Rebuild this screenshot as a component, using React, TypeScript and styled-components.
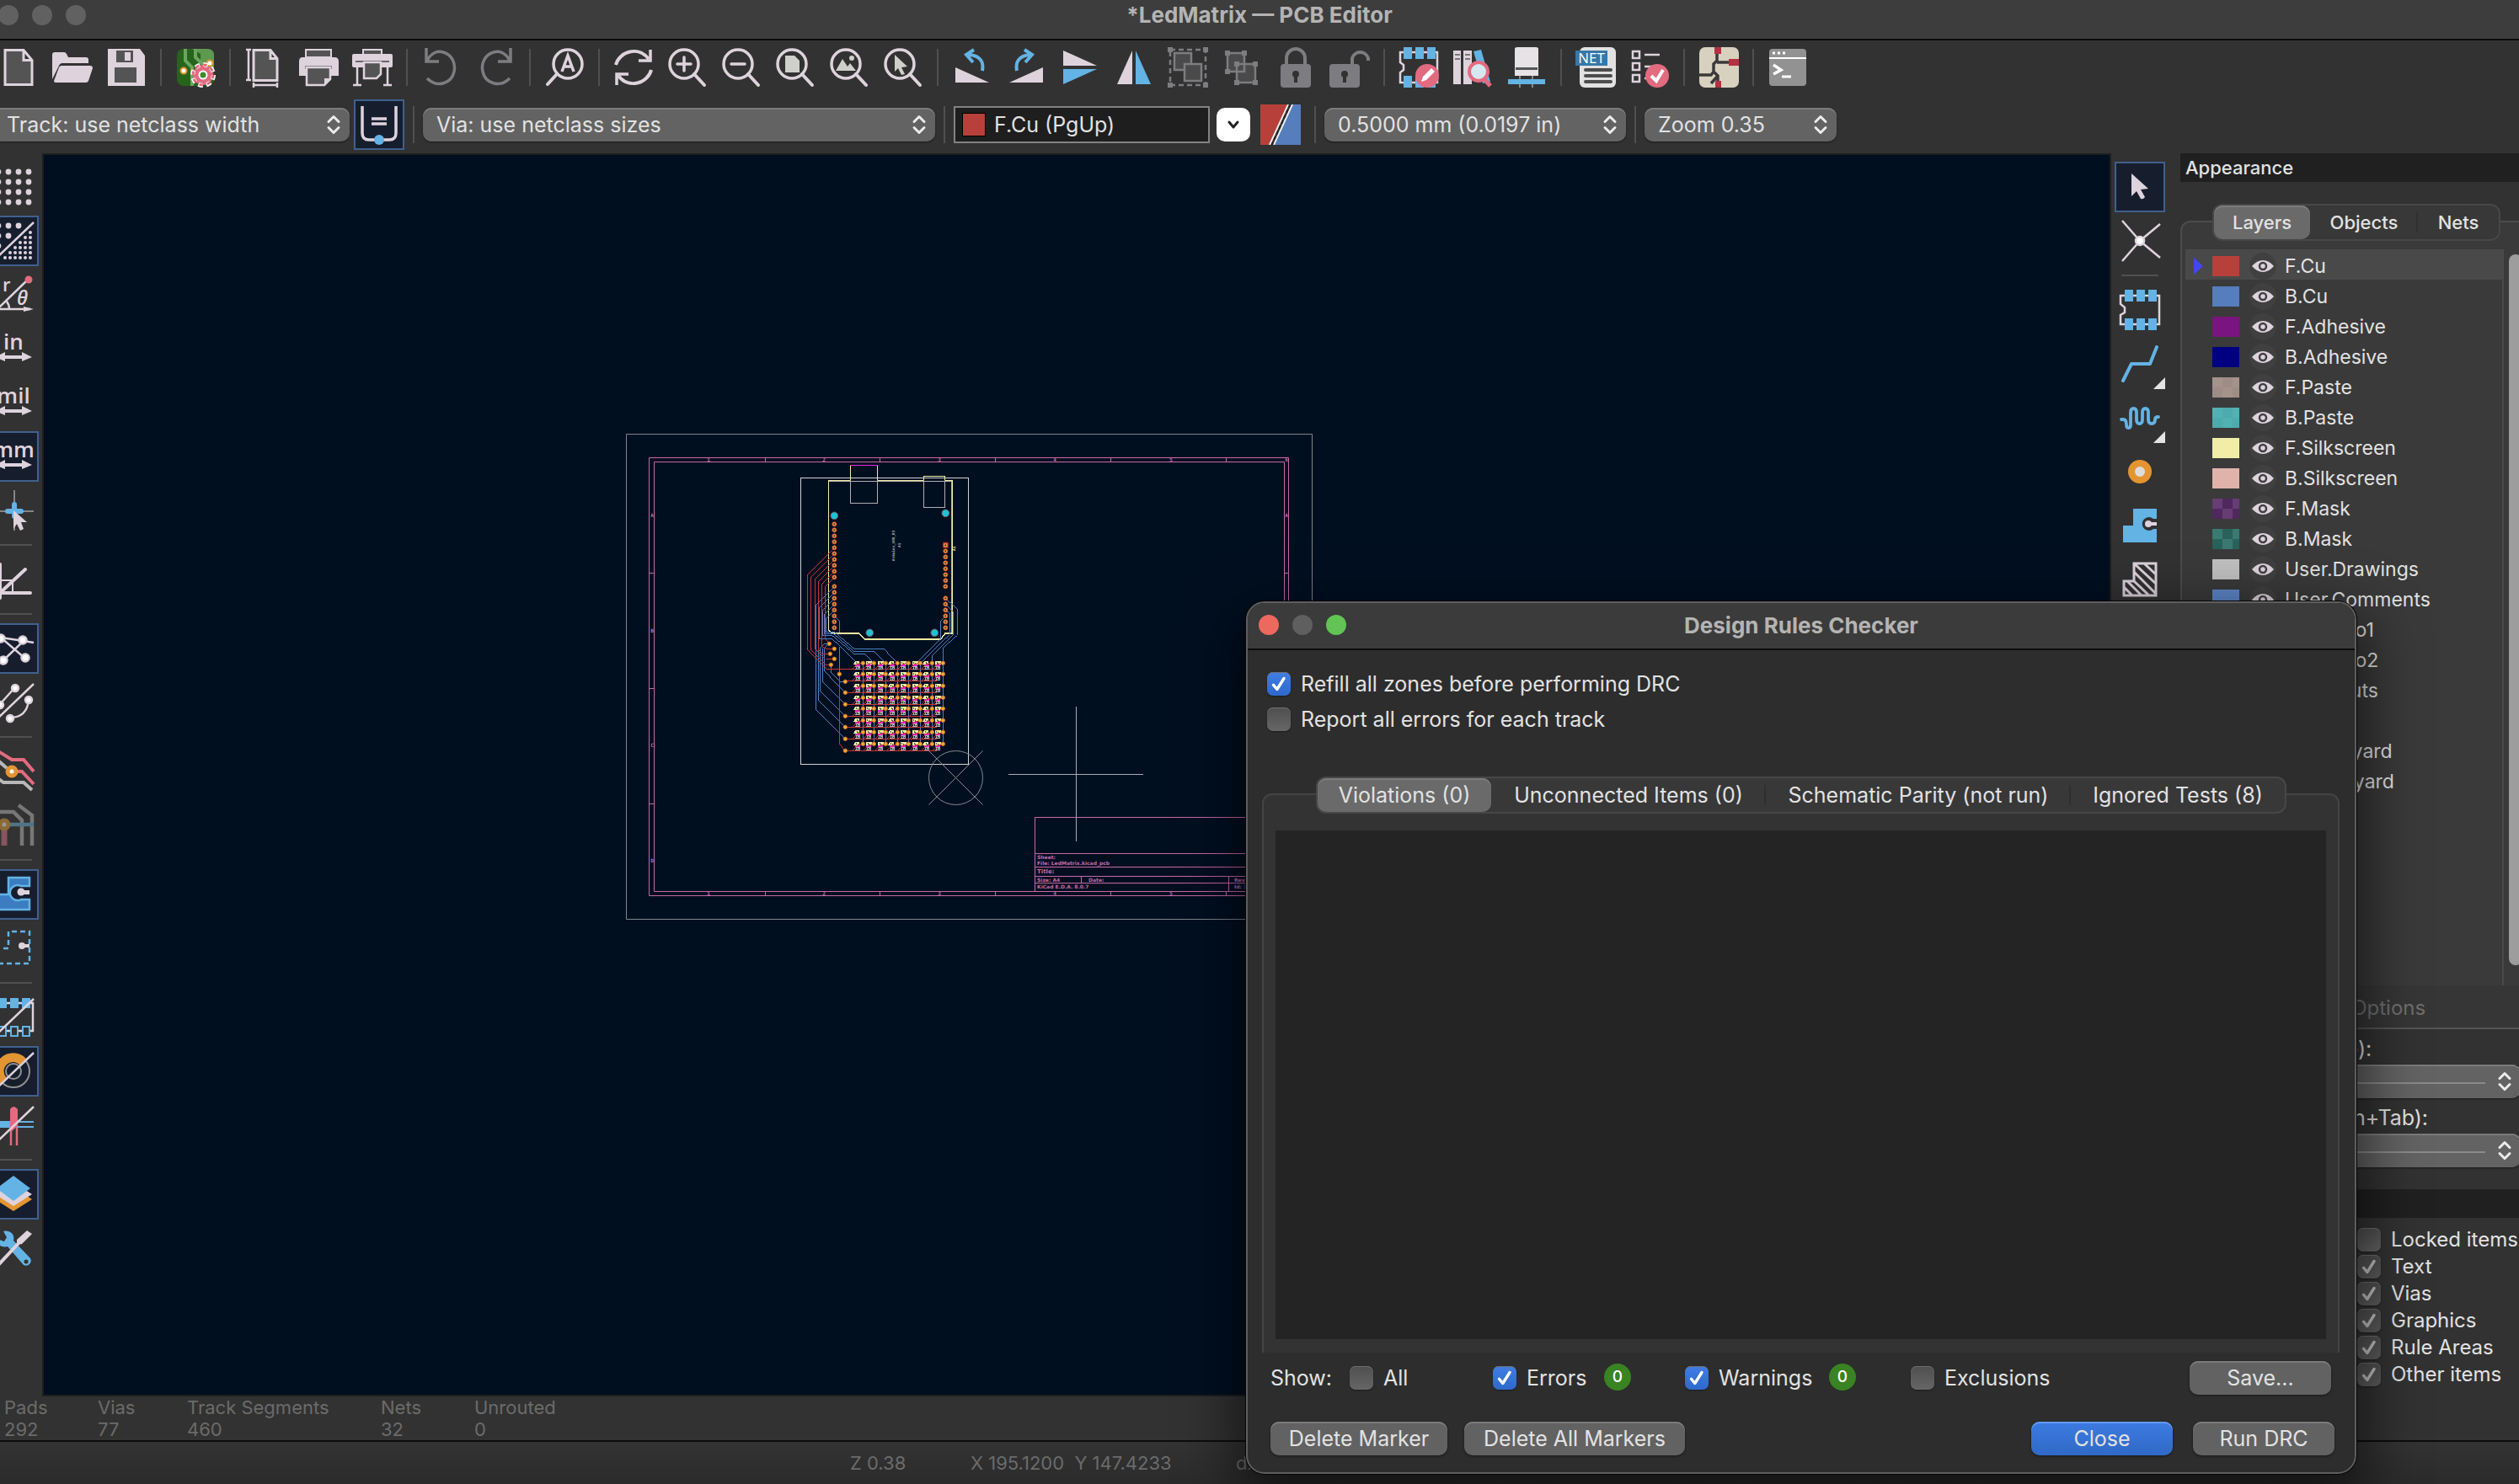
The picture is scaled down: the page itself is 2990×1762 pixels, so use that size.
import React from 'react';
import styled, { createGlobalStyle } from 'styled-components';

const C = {
  light: '#ded3dd',
  blue: '#63b3e5',
  dim: '#7d7c80',
  paper: '#545454',
  red: '#b8403a',
  pink: '#e26b80',
  orange: '#e39532',
  text: '#e2e2e2',
};

const Global = createGlobalStyle`
  *, *::before, *::after { box-sizing: border-box; }
  body { margin: 0; background: #323232; overflow: hidden; }
  button, select, input { font: inherit; color: inherit; margin: 0; }
`;

const Window = styled.div`
  position: relative;
  display: flex;
  flex-direction: column;
  height: 100vh;
  overflow: hidden;
  background: #323232;
  color: ${C.text};
  font-family: Inter, "Liberation Sans", sans-serif;
  font-size: 25px;
  line-height: 32px;
  white-space: nowrap;
`;

const TitleBar = styled.header`
  position: relative;
  display: flex;
  align-items: center;
  justify-content: center;
  height: 48px;
  padding-bottom: 10px;
  background: #3d3d3d;
  border-bottom: 2px solid #0c0c0c;
  flex: none;
`;

const Title = styled.h1`
  margin: 0;
  font-size: 26px;
  font-weight: 700;
  color: #b4b4b4;
`;

const Lights = styled.div<{ $left: number; $top: number }>`
  position: absolute;
  left: ${p => p.$left}px;
  top: ${p => p.$top}px;
  display: flex;
  gap: 16px;
`;

const Light = styled.button<{ $color: string }>`
  width: 24px;
  height: 24px;
  padding: 0;
  border: 0;
  border-radius: 50%;
  background: ${p => p.$color};
`;

const IconBar = styled.div`
  display: flex;
  align-items: center;
  gap: 4px;
  height: 64px;
  margin-left: -8px;
  flex: none;
`;

const ToolButton = styled.button<{ $on?: boolean }>`
  position: relative;
  display: grid;
  place-items: center;
  flex: none;
  width: 60px;
  height: 60px;
  padding: 0;
  border: 2px solid ${p => (p.$on ? '#40608f' : 'transparent')};
  background: ${p => (p.$on ? '#161e2e' : 'transparent')};
`;

const Rule = styled.span<{ $across?: boolean }>`
  flex: none;
  width: ${p => (p.$across ? 44 : 2)}px;
  height: ${p => (p.$across ? 2 : 44)}px;
  margin: ${p => (p.$across ? '6px 8px' : '0 6px')};
  background: #505050;
`;

const OptionBar = styled.div`
  display: flex;
  align-items: center;
  height: 70px;
  padding-top: 2px;
  flex: none;
`;

const TrackGroup = styled.div`
  display: flex;
  align-items: center;
  gap: 5px;
  margin-left: -8px;
  flex: none;
`;

const BarRule = styled.span`
  width: 2px;
  height: 44px;
  margin: 0 10px;
  background: #505050;
  flex: none;
`;

const SelectBox = styled.span<{ $width?: number }>`
  display: grid;
  align-items: center;
  flex: none;
  width: ${p => (p.$width ? p.$width + 'px' : 'auto')};
  height: 40px;
  border-radius: 10px;
  background: #636363;
  box-shadow: inset 0 2px 0 #7b7b7b, 0 1px 2px rgba(0, 0, 0, 0.5);
  & > * { grid-area: 1 / 1; }
`;

const Select = styled.select`
  appearance: none;
  width: 100%;
  height: 40px;
  padding: 0 48px 0 16px;
  border: 0;
  background: transparent;
  line-height: 32px;
`;

const ChevronSvg = styled.svg`
  justify-self: end;
  margin-right: 10px;
  pointer-events: none;
`;

const Chevrons = () => (
  <ChevronSvg width="18" height="24" viewBox="0 0 18 24" fill="none" stroke="#ececec" strokeWidth="3" strokeLinecap="round" strokeLinejoin="round">
    <path d="M3 8.5 9 2.5l6 6M3 15.5l6 6 6-6" />
  </ChevronSvg>
);

const Drop = ({ label, value, width }: { label: string; value: string; width: number }) => (
  <SelectBox $width={width}>
    <Select aria-label={label} defaultValue={value}>
      <option>{value}</option>
    </Select>
    <Chevrons />
  </SelectBox>
);

const LayerBox = styled.div`
  display: flex;
  align-items: center;
  gap: 10px;
  width: 304px;
  height: 44px;
  padding-left: 8px;
  border: 2px solid #828282;
  background: #1e1e1e;
  flex: none;
`;

const LayerChip = styled.span`
  width: 28px;
  height: 28px;
  border: 1px solid #000;
  background: ${C.red};
`;

const LayerInput = styled.input`
  width: 240px;
  padding: 0;
  border: 0;
  background: transparent;
`;

const WhiteButton = styled.button`
  display: grid;
  place-items: center;
  width: 40px;
  height: 40px;
  margin: 0 12px 0 8px;
  padding: 0;
  border: 0;
  border-radius: 10px;
  background: #fff;
  flex: none;
`;

const PairButton = styled.button`
  width: 48px;
  height: 48px;
  margin-right: 6px;
  padding: 0;
  border: 0;
  background: none;
  flex: none;
`;

const Body = styled.div`
  display: flex;
  flex: 1;
  min-height: 0;
`;

const Work = styled.main`
  display: flex;
  flex-direction: column;
  flex: 1;
  min-width: 0;
`;

const WorkRow = styled.div`
  display: flex;
  flex: 1;
  min-height: 0;
`;

const SideTools = styled.nav<{ $width: number; $start: number }>`
  display: flex;
  flex-direction: column;
  gap: 4px;
  flex: none;
  width: ${p => p.$width}px;
  padding-top: 10px;
  overflow: hidden;
  & > * { margin-left: ${p => p.$start}px; }
  & > span { margin-left: ${p => p.$start + 8}px; }
`;

const Canvas = styled.div`
  flex: 1;
  min-width: 0;
  border: 2px solid #1d1e1f;
  background: #000f20;
  overflow: hidden;
`;

const Board = styled.svg`
  display: block;
  width: 100%;
  height: 100%;
`;

const InfoBar = styled.dl`
  display: flex;
  gap: 64px;
  height: 52px;
  margin: 0;
  padding: 0 5px;
  flex: none;
  font-size: 22px;
  line-height: 26px;
  color: #6b6b6b;
`;

const InfoItem = styled.div<{ $width: number }>`
  width: ${p => p.$width}px;
  dt, dd { margin: 0; }
`;

const StatusBar = styled.footer`
  display: flex;
  align-items: center;
  height: 52px;
  padding-left: 1009px;
  flex: none;
  border-top: 2px solid #0c0c0c;
  background: linear-gradient(#333, #2b2b2b);
  font-size: 22px;
  color: #6b6b6b;
`;

const StatusField = styled.span<{ $width: number }>`
  width: ${p => p.$width}px;
  white-space: pre;
`;

const Panel = styled.aside`
  display: flex;
  flex-direction: column;
  flex: none;
  width: 402px;
  overflow: hidden;
`;

const PanelHead = styled.h2`
  height: 34px;
  margin: 0;
  padding-left: 6px;
  background: #202020;
  font-size: 22px;
  line-height: 34px;
  font-weight: 500;
  flex: none;
`;

const TabStrip = styled.div<{ $start: number; $top: number; $small?: boolean }>`
  position: relative;
  z-index: 1;
  display: flex;
  align-items: center;
  align-self: flex-start;
  flex: none;
  height: 44px;
  margin: ${p => p.$top}px 0 -24px ${p => p.$start}px;
  padding: 2px;
  border-radius: 12px;
  background: #383838;
  box-shadow: inset 0 0 0 2px #474747;
  font-size: ${p => (p.$small ? 22 : 25)}px;
  font-weight: ${p => (p.$small ? 500 : 400)};
`;

const Tab = styled.button<{ $width: number; $on?: boolean; $bar?: boolean }>`
  position: relative;
  width: ${p => p.$width}px;
  height: 40px;
  padding: 0;
  border: 0;
  border-radius: 10px;
  background: ${p => (p.$on ? '#6a6a6a' : 'transparent')};
  box-shadow: ${p => (p.$on ? 'inset 0 2px 0 #7c7c7c' : 'none')};
  text-align: center;
  &::after {
    content: '';
    display: ${p => (p.$bar ? 'block' : 'none')};
    position: absolute;
    right: 0;
    top: 8px;
    width: 2px;
    height: 24px;
    background: #2f2f2f;
  }
`;

const LayerPage = styled.section`
  display: flex;
  flex-direction: column;
  flex: 1;
  min-height: 0;
  width: 430px;
  padding: 32px 0 0 4px;
  border: 2px solid #4c4c4c;
  border-radius: 12px 0 0 0;
  border-bottom-color: #555;
  background: #3a3a3a;
  font-size: 24px;
`;

const LayerScroll = styled.div`
  display: flex;
  flex: 1;
  min-height: 0;
  overflow: hidden;
`;

const LayerList = styled.ul`
  width: 378px;
  margin: 0;
  padding: 0;
  list-style: none;
  border-right: 2px solid #4a4a4a;
  font-size: 23px;
`;

const LayerRow = styled.li<{ $on?: boolean }>`
  display: flex;
  align-items: center;
  height: 36px;
  padding: 4px 0 0 10px;
  background: ${p => (p.$on ? '#494949' : 'transparent')};
`;

const Marker = styled.span<{ $on?: boolean }>`
  width: 12px;
  height: 20px;
  margin-right: 10px;
  background: ${p => (p.$on ? '#4346f5' : 'transparent')};
  clip-path: polygon(0 0, 90% 50%, 0 100%);
`;

const Swatch = styled.span<{ $a: string; $b: string }>`
  width: 32px;
  height: 24px;
  margin-right: 12px;
  background: conic-gradient(${p => p.$b} 25%, ${p => p.$a} 0 50%, ${p => p.$b} 0 75%, ${p => p.$a} 0) 0 0 / 24px 24px;
`;

const EyeButton = styled.button`
  display: grid;
  place-items: center;
  width: 32px;
  height: 32px;
  margin-right: 10px;
  padding: 0;
  border: 0;
  border-radius: 50%;
  background: #404040;
`;

const Thumb = styled.div`
  width: 16px;
  height: 844px;
  margin: 6px 0 0 6px;
  border-radius: 8px;
  background: #9d9d9d;
`;

const DisplayOptions = styled.button`
  height: 50px;
  padding: 4px 0 0 38px;
  border: 0;
  background: #363636;
  color: #6f6f6f;
  text-align: left;
  flex: none;
`;

const Presets = styled.div`
  display: flex;
  flex-direction: column;
  width: 404px;
  padding: 0 0 26px 6px;
  flex: none;
  label { height: 42px; line-height: 46px; }
`;

const DashLine = styled.span`
  height: 2px;
  margin: 4px 42px 0 16px;
  background: #8a8a8a;
  pointer-events: none;
`;

const Filters = styled.div`
  display: flex;
  flex-direction: column;
  padding: 10px 0 62px 210px;
  flex: none;
  font-size: 24px;
`;

const CheckLabel = styled.label<{ $width?: number }>`
  display: flex;
  align-items: center;
  gap: 12px;
  width: ${p => (p.$width ? p.$width + 'px' : 'auto')};
  height: 32px;
  flex: none;
`;

const CheckCell = styled.span`
  display: grid;
  place-items: center;
  width: 28px;
  height: 28px;
  & > * { grid-area: 1 / 1; }
  svg { pointer-events: none; }
`;

const CheckInput = styled.input<{ $quiet?: boolean }>`
  appearance: none;
  width: 28px;
  height: 28px;
  border-radius: 7px;
  background: linear-gradient(#4f4f4f, #666);
  box-shadow: inset 0 1px 0 #6f6f6f, 0 1px 2px rgba(0, 0, 0, 0.4);
  &:checked {
    background: ${p => (p.$quiet ? 'linear-gradient(#4f4f4f, #5e5e5e)' : 'linear-gradient(#3f7ee4, #2f68cb)')};
  }
`;

const Check = ({ text, on, quiet, width }: { text: string; on?: boolean; quiet?: boolean; width?: number }) => (
  <CheckLabel $width={width}>
    <CheckCell>
      <CheckInput type="checkbox" defaultChecked={on} $quiet={quiet} />
      {on && (
        <svg width="28" height="28" viewBox="0 0 28 28" fill="none" stroke={quiet ? '#c4c4c4' : '#fff'} strokeWidth="3.4" strokeLinecap="round" strokeLinejoin="round">
          <path d="M7.5 15.200l4.300 5.300L20 7.500" />
        </svg>
      )}
    </CheckCell>
    {text}
  </CheckLabel>
);

const Dialog = styled.section`
  position: absolute;
  left: 1479px;
  top: 714px;
  display: flex;
  flex-direction: column;
  width: 1318px;
  height: 1036px;
  border: 2px solid #5e5e5e;
  border-radius: 22px;
  background: #2d2d2d;
  box-shadow: 0 0 0 1px #050505, 0 24px 70px 10px rgba(0, 0, 0, 0.6);
  overflow: hidden;
`;

const DialogTitle = styled.header`
  position: relative;
  display: flex;
  align-items: center;
  justify-content: center;
  height: 56px;
  border-bottom: 2px solid #0c0c0c;
  background: #3b3b3b;
  flex: none;
`;

const DialogChecks = styled.div`
  display: flex;
  flex-direction: column;
  gap: 10px;
  padding: 24px 0 0 23px;
  flex: none;
`;

const ResultPage = styled.div`
  flex: 1;
  min-height: 0;
  display: flex;
  margin: 0 18px 0 17px;
  padding: 42px 14px 16px;
  border: 2px solid #444;
  border-bottom: 0;
  border-radius: 12px 12px 0 0;
  background: #333;
`;

const ResultList = styled.div`
  flex: 1;
  background: #242424;
`;

const ShowRow = styled.div`
  display: flex;
  align-items: center;
  height: 40px;
  margin: 10px 28px 0 27px;
  flex: none;
`;

const ShowLabel = styled.span`
  width: 94px;
`;

const Counter = styled.span<{ $after: number }>`
  width: 32px;
  height: 32px;
  margin: -2px ${p => p.$after}px 0 0;
  border-radius: 50%;
  background: #3a8323;
  color: #fff;
  font-size: 19px;
  line-height: 32px;
  font-weight: 500;
  text-align: center;
`;

const PushButton = styled.button<{ $width: number; $main?: boolean }>`
  width: ${p => p.$width}px;
  height: 40px;
  padding: 0;
  border: 0;
  border-radius: 10px;
  background: ${p => (p.$main ? 'linear-gradient(#3d7be2, #3069c6)' : '#626262')};
  box-shadow: inset 0 2px 0 ${p => (p.$main ? '#639aef' : '#7b7b7b')}, 0 1px 3px rgba(0, 0, 0, 0.5);
  flex: none;
`;

const Spacer = styled.span`
  flex: 1;
`;

const ActionRow = styled.div`
  display: flex;
  align-items: center;
  justify-content: space-between;
  margin: 32px 24px 20px 27px;
  flex: none;
`;

const ButtonPair = styled.div<{ $gap: number }>`
  display: flex;
  gap: ${p => p.$gap}px;
`;

/* ---------- icons, all on a 48 unit grid ---------- */

const Glass = ({ children }: { children?: React.ReactNode }) => (
  <g fill="none" stroke={C.light} strokeWidth="3.5" strokeLinecap="round">
    <circle cx="20" cy="20" r="17" />
    <path d="M32 32l12 13" strokeWidth="4" />
    {children}
  </g>
);

const Arrows = ({ word }: { word: string }) => (
  <g fill={C.light}>
    <text x="24" y="25" fontSize="26" fontWeight="600" fontFamily="Open Sans, sans-serif" textAnchor="middle">{word}</text>
    <path d="M2 34l12-6v4h20v-4l12 6-12 5v-3H14v3z" />
  </g>
);

const Slash = () => <path d="M2 46 48 2" stroke={C.light} strokeWidth="2.5" />;

const dots = (x0: number, y0: number, step: number, r: number, keep: (i: number, j: number) => boolean, n: number) =>
  Array.from({ length: n * n }, (_, k) => [k % n, Math.floor(k / n)])
    .filter(([i, j]) => keep(i, j))
    .map(([i, j]) => <circle key={i + '-' + j} cx={x0 + i * step} cy={y0 + j * step} r={r} fill={C.light} />);

const icons: Record<string, React.ReactNode> = {
  new: <path d="M8 3.500h22l10 12v29H8zM30 3.500v12h10" fill={C.paper} stroke={C.light} strokeWidth="3" />,
  open: <g fill={C.light}><path d="M0 38V9q0-3 3-3h11q2 0 3 2l2 4h21q3 0 3 3v4H12q-3 0-4 3z" /><path d="M11 22h34q3 0 3 3l-5 15q-1 2-3 2H4q-2 0-2-2l6-16q1-2 3-2z" /></g>,
  save: <g><path d="M2 2h38l6 8v36H2z" fill={C.light} /><path d="M12 4h20v14H12zM10 24h26v18H10z" fill={C.paper} /><path d="M22 6h7v10h-7z" fill={C.light} /></g>,
  board: (
    <g>
      <rect x="2" y="2" width="44" height="44" rx="8" fill="#27641b" />
      <path d="M20 2h18q8 0 8 8v20L30 18V8z" fill="#5d9a50" />
      <path d="M12 2v14l8 8v22M24 2v10l8 8h12" fill="none" stroke="#6ba55f" strokeWidth="4" />
      <circle cx="10" cy="28" r="3.5" fill="#fff" stroke={C.orange} strokeWidth="2" />
      <circle cx="41" cy="19" r="3.5" fill="#fff" stroke={C.orange} strokeWidth="2" />
      <circle cx="33" cy="33" r="12" fill={C.pink} stroke="#fff" strokeWidth="6" strokeDasharray="5.4 4" />
      <circle cx="33" cy="33" r="12" fill="none" stroke={C.pink} strokeWidth="3" strokeDasharray="4.4 5" />
      <circle cx="33" cy="33" r="10" fill={C.pink} />
      <circle cx="33" cy="33" r="4.5" fill="#3c8d2c" stroke="#fff" strokeWidth="2" />
    </g>
  ),
  page: <g fill="none" stroke={C.light} strokeWidth="2.5"><path d="M11 3.500h20l8 10v26H11zM31 3.500v10h8" fill={C.paper} strokeWidth="3" /><path d="M2 3h6M5 3v36M2 39h6M11 42v6M11 45h28M39 42v6" /></g>,
  print: <g><path d="M9 3h30v9H9z" fill={C.paper} stroke={C.light} strokeWidth="2" /><path d="M5 12h38q5 0 5 5v17H1V17q0-5 4-5z" fill={C.light} /><path d="M8 22h32v4H8z" fill="#777" /><path d="M10 24h28v14l-7 7H10z" fill={C.paper} stroke={C.light} strokeWidth="2.5" /><path d="M31 45v-8h7z" fill={C.light} /></g>,
  plot: <g><path d="M13 3h22v6H13z" fill={C.paper} stroke={C.light} strokeWidth="2" /><path d="M2 8h44q2 0 2 2v12q0 2-2 2H2q-2 0-2-2V10q0-2 2-2z" fill={C.light} /><path d="M4 16h40v2H4z" fill="#666" /><path d="M14 18h20v14l-5 5H14z" fill={C.paper} stroke={C.light} strokeWidth="2.5" /><path d="M6 24v21M42 24v21M1 45h10M37 45h10" stroke={C.light} strokeWidth="2.5" /></g>,
  undo: <path d="M6 1v16h15M7 16C12 6 20 4 26 6c11 3 15 14 13 23-3 14-20 20-32 8" fill="none" stroke={C.dim} strokeWidth="3.5" />,
  redo: <path d="M42 1v16H27M41 16C36 6 28 4 22 6 11 9 7 20 9 29c3 14 20 20 32 8" fill="none" stroke={C.dim} strokeWidth="3.5" />,
  find: <g fill="none" stroke={C.light} strokeWidth="3.5" strokeLinecap="round"><circle cx="28" cy="20" r="17" /><path d="M15 32 4 44" strokeWidth="4" /><path d="M21 29 28 10l7 19M23 23h10" strokeLinecap="butt" /></g>,
  refresh: <g fill="none" stroke={C.light} strokeWidth="4"><path d="M3 21C7 5 30-2 42 14M45 27C41 43 18 50 6 34" /><path d="M44 3v13H30M4 45V32h14" strokeWidth="3.5" /></g>,
  zoomIn: <Glass><path d="M20 12v16M12 20h16" /></Glass>,
  zoomOut: <Glass><path d="M12 20h16" /></Glass>,
  zoomFit: <Glass><path d="M12 10h11l6 6v14H12z" fill="#cfcfcb" stroke="none" /></Glass>,
  zoomObj: <Glass><path d="M8 28l8-14 6 9 3-4 7 9z" fill="#cfcfcb" stroke="none" /><circle cx="27" cy="13" r="3" fill="#cfcfcb" stroke="none" /></Glass>,
  zoomSel: <Glass><path d="M14 9l15 14-7 1 4 8-4 1-4-8-4 4z" fill="#cfcfcb" stroke="none" /></Glass>,
  ccw: <g><path d="M4 24v18h40z" fill={C.light} /><path d="M36 28c2-10-2-18-16-19M26 3l-9 6 8 9" fill="none" stroke={C.blue} strokeWidth="4" /></g>,
  cw: <g><path d="M44 24v18H4z" fill={C.light} /><path d="M13 28c-2-10 2-18 16-19M22 3l9 6-8 9" fill="none" stroke={C.blue} strokeWidth="4" /></g>,
  flipV: <g><path d="M4 4v18h40z" fill={C.light} /><path d="M4 44V26h40z" fill={C.blue} /></g>,
  flipH: <g><path d="M22 4v40H4z" fill={C.light} /><path d="M26 4v40h18z" fill={C.blue} /></g>,
  group: <g fill="none" stroke={C.dim} strokeWidth="2.5"><path d="M3 3h42v42H3z" strokeDasharray="6 4" /><path d="M8 7h20v20H8z" fill="#4a4a4a" /><path d="M20 20h20v20H20z" fill="#4a4a4a" /><path d="M0 0h6v6H0zM42 0h6v6h-6zM0 42h6v6H0zM42 42h6v6h-6z" fill={C.dim} stroke="none" /></g>,
  ungroup: <g fill="none" stroke={C.dim} strokeWidth="2.5"><path d="M7 7h20v22H7zM18 20h22v22H18z" fill="#4a4a4a" /><path d="M4 4h6v6H4zM24 4h6v6h-6zM4 26h6v6H4zM15 17h6v6h-6zM37 17h6v6h-6zM15 39h6v6h-6zM37 39h6v6h-6z" fill={C.dim} stroke="none" /></g>,
  lock: <g><path d="M13 22V13a11 11 0 0 1 22 0v9" fill="none" stroke={C.dim} strokeWidth="4" /><rect x="6" y="20" width="36" height="28" rx="4" fill={C.dim} /><circle cx="24" cy="32" r="4" fill="#323232" /><path d="M22 33h4v9h-4z" fill="#323232" /></g>,
  unlock: <g><path d="M27 22V13a10 10 0 0 1 19 0v3" fill="none" stroke={C.dim} strokeWidth="4" /><rect x="0" y="20" width="36" height="28" rx="4" fill={C.dim} /><circle cx="18" cy="32" r="4" fill="#323232" /><path d="M16 33h4v9h-4z" fill="#323232" /></g>,
  footprintEdit: <g><path d="M2 6h44v36H2V30l4-3v-6l-4-3z" fill="none" stroke={C.light} strokeWidth="2.5" /><path d="M6 0h10v14H6zM20 0h10v14H20zM34 0h10v14H34zM6 34h10v14H6zM20 34h10v14H20zM34 34h10v14H34z" fill={C.blue} /><circle cx="34" cy="34" r="14" fill={C.pink} /><path d="M27 41l2-6 10-10 4 4-10 10z" fill="#fff" /></g>,
  library: <g><path d="M1 4h9v40H1zM13 4h10v40H13z" fill={C.light} /><path d="M25 5l9-2 11 38-9 2z" fill={C.blue} /><path d="M3 9h6M3 14h6M15 9h6M15 14h6" stroke="#777" strokeWidth="2" /><circle cx="31" cy="29" r="11" fill="#d5e8ef" stroke={C.pink} strokeWidth="4" /><path d="M38 38l7 8" stroke={C.pink} strokeWidth="5" /></g>,
  update: <g><path d="M10 2q0-2 3-2h22q3 0 3 2v32H10z" fill="#e6e2e6" /><path d="M11 24h26v3H11z" fill="#555" /><path d="M16 34v14M31 34v14" stroke="#888" strokeWidth="2" /><path d="M2 38h44v6H2z" fill={C.blue} /></g>,
  net: <g><rect x="5" y="0" width="43" height="48" rx="6" fill="#e2e2e2" /><path d="M0 4h38v18H0z" fill="#3678a8" /><text x="19" y="19" fill="#fff" fontSize="17" fontWeight="500" fontFamily="Open Sans, sans-serif" textAnchor="middle">NET</text><path d="M12 27h30M12 34h30M12 41h30" stroke="#4d4d4d" strokeWidth="4" strokeLinecap="round" /></g>,
  drc: <g><path d="M4 5h8v8H4zM4 19h8v8H4zM4 33h8v8H4zM18 9h18M18 23h10M18 37h6" fill="none" stroke={C.light} strokeWidth="2.5" /><circle cx="33" cy="34" r="14" fill={C.pink} /><path d="M26 34l6 6 8-13" fill="none" stroke="#fff" strokeWidth="4" /></g>,
  schematic: <g><rect x="1" y="0" width="47" height="48" rx="7" fill="#d9d1bf" /><path d="M22 8v8l-4 4v9l5 5v8M22 18h16M1 33h14l4-5M23 34l-8 9" fill="none" stroke="#3a3a3a" strokeWidth="3.5" /><path d="M19 0h8v8h-8zM36 14h12v8H36zM20 40h7v8h-7z" fill="#b23143" /></g>,
  console: <g><rect x="2" y="2" width="44" height="44" rx="4" fill="#929292" /><path d="M2 13h44" stroke="#fff" strokeWidth="2" /><path d="M6 7h3M12 7h3M18 7h3" stroke="#fff" strokeWidth="3" /><path d="M7 21l9 6-9 5" fill="none" stroke="#fff" strokeWidth="3.5" /><path d="M17 35h11" stroke="#fff" strokeWidth="3" /></g>,
  autoWidth: <g><path d="M4 2v32q0 8 8 8h24q8 0 8-8V2M15 17h18M15 23h18" fill="none" stroke={C.light} strokeWidth="3.5" /><circle cx="24" cy="42" r="6" fill={C.blue} /></g>,
  grid: <g>{dots(6, 6, 12, 3.4, () => true, 4)}</g>,
  gridOver: <g>{dots(6, 6, 12, 3.4, (i, j) => i + j < 3, 4)}<Slash />{dots(8, 14, 6, 2, (i, j) => i + j > 5 && i < 7 && j < 6, 7)}</g>,
  polar: <g><path d="M2 41h42M5 41 40 7M16 32q3 4 3 9" fill="none" stroke={C.light} strokeWidth="2.5" /><path d="M36 38l12 3-12 3z" fill={C.light} /><circle cx="42" cy="6" r="4.5" fill={C.pink} /><g fill={C.light} fontFamily="Open Sans, sans-serif" fontWeight="600"><text x="11" y="20" fontSize="22">r</text><text x="28" y="36" fontSize="23" fontStyle="italic">θ</text></g></g>,
  in: <Arrows word="in" />,
  mil: <Arrows word="mil" />,
  mm: <Arrows word="mm" />,
  cursor: <g><path d="M25 0v48M0 25h48" stroke="#858585" strokeWidth="2" /><path d="M25 17v14M17 25h16" stroke={C.blue} strokeWidth="6" strokeLinecap="round" /><path d="M24 24l16 14h-7l3 8-4 2-4-8-4 6z" fill={C.light} /></g>,
  angle: <g fill="none" stroke={C.light} strokeLinecap="round"><path d="M8 6v40M8 40h36M8 40l30-28" strokeWidth="4" /><path d="M10 25h13v15" strokeWidth="2" /></g>,
  rats: <g stroke={C.light} strokeWidth="2.5"><path d="M9 11 36 15l12 2M9 11l28 24M12 38l24-23" /><g fill="#fff"><circle cx="9" cy="12" r="4.5" /><circle cx="35" cy="14" r="4.5" /><circle cx="12" cy="38" r="4.5" /><circle cx="38" cy="35" r="4.5" /></g></g>,
  curves: <g stroke={C.light} strokeWidth="2.5" fill="none"><path d="M2 46 48 2M8 26 26 6M20 42q20 0 22-21" /><g fill="#fff"><circle cx="8" cy="27" r="4" /><circle cx="26" cy="7" r="4" /><circle cx="42" cy="21" r="4" /><circle cx="20" cy="43" r="4" /></g></g>,
  hiNets: <g fill="none" strokeWidth="4"><path d="M6 0l16 10h14l12 14M20 24h14l14 15" stroke={C.pink} /><path d="M0 6l16 14M0 28l12 9h24l10 9" stroke="#b8b8b8" /><circle cx="22" cy="24" r="5" fill="#fff" stroke={C.orange} strokeWidth="5" /></g>,
  dimNets: <g fill="none" strokeWidth="4.5"><path d="M13 24v24" stroke="#865560" strokeWidth="7" /><path d="M8 8h16l10 10v30M30 0l16 12v36" stroke="#777" /><path d="M16 23h32" stroke="#4f7487" /><circle cx="13" cy="23" r="5" fill="#999" stroke="#8b6a38" strokeWidth="5" /></g>,
  zoneFill: <g><path d="M2 24h16V4h25v10H33a9 9 0 1 0 0 16h10v12H2z" fill="#3c7cc0" stroke={C.blue} strokeWidth="2.5" /><path d="M34 19h9v5h-9z" fill={C.light} /><circle cx="33" cy="21" r="4.5" fill={C.light} /></g>,
  zoneLine: <g><path d="M2 24h16V4h25v38H2z" fill="none" stroke={C.blue} strokeWidth="2.5" strokeDasharray="6 4" /><path d="M34 19h9v4h-9z" fill={C.light} /><circle cx="34" cy="21" r="4" fill={C.light} /></g>,
  fpLine: <g><path d="M2 7h45v33H2" fill="none" stroke={C.light} strokeWidth="2.5" /><path d="M6 1h10v12H6zM20 1h10v12H20zM34 1h10v12H34z" fill={C.blue} /><path d="M7 35h8v11H7zM21 35h8v11h-8zM35 35h8v11h-8z" fill="#323232" stroke={C.blue} strokeWidth="2" /><Slash /></g>,
  viaLine: <g fill="none"><circle cx="24" cy="24" r="19" stroke="#8f8f8f" strokeWidth="2" /><circle cx="24" cy="24" r="9" stroke="#8f8f8f" strokeWidth="2" /><path d="M9 38A19 19 0 0 1 38 10" stroke={C.orange} strokeWidth="3" /><path d="M12 35A14 14 0 0 1 35 13" stroke={C.orange} strokeWidth="10" /><Slash /></g>,
  trackLine: <g><path d="M0 19h24v8H0z" fill={C.blue} /><path d="M20 5q4-6 9 0v20l-9 8z" fill={C.pink} /><path d="M21 20v28M28 20v28" stroke={C.pink} strokeWidth="2.5" /><path d="M28 20h20M28 26h20" stroke={C.blue} strokeWidth="2" /><Slash /></g>,
  stack: <g><path d="M24 15l22 15-22 14L2 30z" fill={C.orange} /><path d="M24 10l22 14-22 14L2 24z" fill={C.light} /><path d="M24 2l20 15-20 15L4 17z" fill={C.blue} /></g>,
  tools: <g><path d="M12 4c8-2 14 4 12 11l20 21q2 4-1 7t-7 1L17 22c-8 2-13-3-12-9l8 3 3-5z" fill={C.blue} /><circle cx="39" cy="40" r="2.5" fill="#323232" /><path d="M5 45 33 15" stroke={C.light} strokeWidth="4" /><path d="M28 14 40 3l6 4L34 19q-4 1-6-1z" fill={C.light} /></g>,
  select: <path d="M14 8l20 18-9 1 5 9q-2 3-5 2l-5-9-6 6z" fill={C.light} />,
  ratsnest: <g stroke={C.light} strokeWidth="2.5"><path d="M3 0l21 24L48 4M3 48l21-24 24 20" fill="none" /><circle cx="24" cy="24" r="5" fill="#fff" /></g>,
  footprint: <g><path d="M1 7h46v34H1V30l5-3v-6l-5-4z" fill="none" stroke={C.light} strokeWidth="2.5" /><path d="M6 0h10v14H6zM20 0h10v14H20zM34 0h10v14H34zM6 34h10v14H6zM20 34h10v14H20zM34 34h10v14H34z" fill={C.blue} /></g>,
  route: <path d="M4 44 14 24h22L44 4" fill="none" stroke={C.blue} strokeWidth="4" strokeLinecap="round" strokeLinejoin="round" />,
  tune: <path d="M2 26h2q4 0 4 6 0 4 2.500 4t2.500-4V18q0-5 3.500-5t3.500 5v8q0 5 3.500 5t3.500-5v-8q0-5 3.500-5t3.500 5v8q0 5 4 5t4-5q0-3 4-3" fill="none" stroke={C.blue} strokeWidth="3.8" strokeLinecap="round" />,
  via: <circle cx="24" cy="24" r="10" fill="#ddd" stroke={C.orange} strokeWidth="8" />,
  zone: <g><path d="M4 24h12V4h28v12h-4a8 8 0 1 0 0 12h4v16H4z" fill={C.blue} /><circle cx="34" cy="22" r="4" fill={C.light} /><path d="M34 20h10v4H34z" fill={C.light} /></g>,
  hatch: <g><path d="M5 26h12V5h26v38H5zM17 5l26 24M17 15l26 26M29 5l14 13M17 26l18 17M9 26l17 17M5 33l10 10" fill="none" stroke={C.light} strokeWidth="3" /></g>,
};

const Icon = ({ name }: { name: string }) => (
  <svg width="48" height="48" viewBox="0 0 48 48" overflow="visible" aria-hidden="true">{icons[name]}</svg>
);

const Flyout = styled.span`
  position: absolute;
  right: -2px;
  bottom: -2px;
  width: 14px;
  height: 14px;
  background: #e4e4e4;
  clip-path: polygon(100% 0, 100% 100%, 0 100%);
`;

const topTools = 'new open save | board | page print plot | undo redo | find | refresh zoomIn zoomOut zoomFit zoomObj zoomSel | ccw cw flipV flipH group ungroup lock unlock | footprintEdit library update | net drc | schematic | console';
const leftTools = 'grid gridOver* polar in mil mm* cursor | angle | rats* curves | hiNets dimNets | zoneFill* zoneLine | fpLine viaLine* trackLine | stack* tools';
const rightTools = 'select* ratsnest | footprint route+ tune+ via zone hatch';

const Tools = ({ spec, across }: { spec: string; across?: boolean }) => (
  <>
    {spec.split(' ').map((word, i) => {
      if (word === '|') return <Rule key={i} $across={across} />;
      const name = word.replace(/[*+]/, '');
      return (
        <ToolButton key={i} aria-label={name} $on={word.endsWith('*')}>
          <Icon name={name} />
          {word.endsWith('+') && <Flyout />}
        </ToolButton>
      );
    })}
  </>
);

/* ---------- board drawing ---------- */

const SHEET = '#c868a8';
const TRACK = '#c83434';
const BACK = '#4d7fc4';
const SILK = '#f2eda1';
const FAB = '#afafaf';

const cols = [283, 322, 364, 406, 445, 487, 529, 568];
const rows = [742, 781, 823, 865, 904, 946, 988, 1030];
const buses = [763, 805, 847, 889, 931, 970, 1012, 1054];
const leftPins = [247, 268, 289, 310, 331, 352, 373, 394, 415, 436, 469, 490, 511, 532, 553, 574, 595, 616];
const rightPins = [343, 364, 385, 406, 427, 448, 469, 511, 532, 553, 574, 595, 616];

const Pin = ({ x, y }: { x: number; y: number }) => (
  <g>
    <circle cx={x} cy={y} r="7.5" fill="#eeaa48" stroke="#d04a34" strokeWidth="3" />
    <path d={`M${x - 3} ${y}h6M${x} ${y - 3}v6`} stroke="#1a1a1a" strokeWidth="2.5" />
  </g>
);

const Via = ({ x, y }: { x: number; y: number }) => (
  <circle cx={x} cy={y} r="7" fill="#ecb02c" stroke="#c4562c" strokeWidth="2.5" />
);

const Led = ({ x, y, n }: { x: number; y: number; n: number }) => (
  <g>
    <path d={`M${x} ${y - 7}h${n % 3 ? 20 : 14}v13h-20z`} fill={SILK} />
    <path d={`M${x + 5 + (n % 4)} ${y - 3}v5M${x + 12 - (n % 3)} ${y - 1}v6`} stroke="#000f20" strokeWidth="2" />
    <path d={`M${x} ${y + 6}h17v6h-17z`} fill="#f01ee0" />
    <path d={`M${x - 1} ${y + 12}h19v11h-19z`} fill={FAB} />
    <path d={`M${x + 3} ${y + 15}v5M${x + 9} ${y + 13}v6M${x + 14} ${y + 16}v4`} stroke="#000f20" strokeWidth="3" />
  </g>
);

const ring = [[181, 217], [577, 208], [307, 634], [538, 634]];
const jumpers = [[163, 673], [181, 691], [166, 709], [181, 727], [169, 748], [199, 781], [220, 808], [220, 847], [220, 889], [220, 931], [220, 970], [220, 1012], [220, 1054]];

const BoardDrawing = () => (
  <Board aria-label="Board">
    <g transform="translate(-52 -184)">
      <g fill="none" stroke="#7f858c" strokeWidth="1">
        <path d="M743.500 515.500h814v576h-814z" />
      </g>
      <g fill="none" stroke={SHEET} strokeWidth="1">
        <path d="M770.500 543.500h759v520h-759zM776.500 548.500h748v510h-748z" />
        {[908, 1044, 1181, 1318, 1455].map(x => <path key={x} d={`M${x}.5 543.500v5M${x}.5 1058.500v5`} />)}
        {[680, 817, 954].map(y => <path key={y} d={`M770.500 ${y}.5h6M1524.500 ${y}.5h5`} />)}
        <path d="M1228.500 1058.500v-88h296M1228.500 1013.500h296M1228.500 1029.500h296M1228.500 1040.500h296M1228.500 1048.500h296M1283.500 1040.500v8M1458.500 1040.500v18" />
      </g>
      <g fill={SHEET} fontFamily="DejaVu Sans Mono, monospace" fontWeight="700" fontSize="6" textAnchor="middle">
        {[841, 978, 1115, 1252, 1390, 1527].map((x, i) => (
          <React.Fragment key={x}><text x={x} y="548">{i + 1}</text><text x={x} y="1063">{i + 1}</text></React.Fragment>
        ))}
        {[612, 749, 885, 1022].map((y, i) => (
          <React.Fragment key={y}><text x="774" y={y + 2}>{'ABCD'[i]}</text><text x="1527" y={y + 2}>{'ABCD'[i]}</text></React.Fragment>
        ))}
      </g>
      <g fill={SHEET} fontFamily="DejaVu Sans, sans-serif" fontWeight="700" fontSize="6">
        <text x="1231" y="1020">Sheet:</text>
        <text x="1231" y="1027">File: LedMatrix.kicad_pcb</text>
        <text x="1231" y="1037" fontSize="7">Title:</text>
        <text x="1231" y="1047">Size: A4</text>
        <text x="1292" y="1047">Date:</text>
        <text x="1465" y="1047">Rev:</text>
        <text x="1231" y="1055">KiCad E.D.A. 8.0.7</text>
        <text x="1465" y="1055">Id: 1/1</text>
      </g>

      <g transform="translate(930 540) scale(0.3333)" fill="none" strokeWidth="3">
        <g shapeRendering="crispEdges">
          <path d="M61 82h598v1020H61z" stroke="#cdd5d3" />
          <path d="M163 94h435v540" stroke={FAB} />
          <path d="M238 91v81h97V91M499 91v96h76V91" stroke={FAB} />
          <path d="M238 91V38h97v53M499 91V76h76v15M160 91h78M335 91h164M575 91h26v545h-25l-16 21H290l-20-21h-98l-12-14V91" stroke={SILK} strokeWidth="4" />
          <path d="M238 37h97" stroke="#f01ee0" strokeWidth="4" />

          <g stroke={BACK}>
            {cols.map(x => <path key={x} d={`M${x} 742v288`} />)}
            <path d="M181 469l-66 66v373l105 104M181 490l-54 54v111h48M181 511l-42 42v92h36l76 64h39l32 33M181 532l-36 36v70h34l71 62h73l41 42M181 553l-30 30v48h30l71 60h105l49 51M181 574l18 18" />
            <path d="M199 592v40M127 655h46l87 84M199 684v97M169 748v27l33 33h18M145 690v80l75 77M139 690v118l81 81M130 690v150l90 91M124 690v185l96 95M145 690l15-17M130 690l15-17h18" />
            <path d="M577 511l42 38v94l-51 45v54M577 532l27 27v81l-75 75v27M577 553l15 12v75L487 742M577 574l-18 18v63l-84 84" />
          </g>
          <g stroke={TRACK}>
            <path d="M181 331l-96 96v267l70 69h390M181 352l-84 84v258l54 54h18M181 373l-69 69v248l37 37h32M181 394l-57 57v243l15 15h27M181 415l-45 45v222l14 9h31M181 436l-33 33v184l15 20M199 781v249l21 24" />
            {buses.slice(1).map(y => <path key={y} d={`M220 ${y}h325`} />)}
          </g>
          {rows.map((y, r) => cols.map((x, c) => <Led key={x + '-' + y} x={x - 28} y={y} n={r * 3 + c * 5} />))}
          <g stroke={TRACK}>
            {rows.map((y, r) => cols.map(x => <path key={x + '-' + y} d={`M${x - 38} ${buses[r]}l18 -18 20 ${y - buses[r] + 18}`} />))}
          </g>
        </g>
        {rows.map(y => cols.map(x => <Via key={x + '-' + y} x={x} y={y} />))}
        {jumpers.map(([x, y]) => <Via key={x + '-' + y} x={x} y={y} />)}
        {leftPins.map(y => <Pin key={y} x={181} y={y} />)}
        <path d="M568 312h19v20h-19z" fill={TRACK} />
        <Pin x={577} y={322} />
        {rightPins.map(y => <Pin key={y} x={577} y={y} />)}
        {ring.map(([x, y]) => <circle key={x} cx={x} cy={y} r="13" fill="#1cc3d6" stroke="#8d4a55" strokeWidth="2.5" />)}
        <g fontFamily="DejaVu Sans Mono, monospace" fontSize="13" fontWeight="700" textAnchor="middle">
          <text transform="translate(395 324) rotate(-90)" fill={FAB}>Arduino_UNO_R3</text>
          <text transform="translate(416 322) rotate(-90)" fill={FAB}>A1</text>
          <text transform="translate(613 334) rotate(-90)" fill={SILK}>A1</text>
        </g>
      </g>

      <g fill="none" stroke="#85898e" strokeWidth="1">
        <circle cx="1134.5" cy="923.5" r="32" />
        <path d="M1102.500 891.500l64 64M1166.500 891.500l-64 64" />
        <path d="M1277.500 839v160M1197 919.500h160" stroke="#a6abb0" />
      </g>
    </g>
  </Board>
);

/* ---------- data ---------- */

const layers: [string, string, string?][] = [
  ['F.Cu', '#b8403a'], ['B.Cu', '#567dbc'], ['F.Adhesive', '#7a147e'], ['B.Adhesive', '#000080'],
  ['F.Paste', '#a4928b', '#9e8d86'], ['B.Paste', '#52b1b2', '#4cabac'], ['F.Silkscreen', '#f1eda8'], ['B.Silkscreen', '#e0b3aa'],
  ['F.Mask', '#673d75', '#50285e'], ['B.Mask', '#3a7a73', '#28625b'], ['User.Drawings', '#c0c0c0'], ['User.Comments', '#5f88cb'],
  ['User.Eco1', '#b4dbd2'], ['User.Eco2', '#d8c852'], ['Edge.Cuts', '#d0d2cd'], ['Margin', '#ff26e2'],
  ['F.Courtyard', '#ff26e2'], ['B.Courtyard', '#26e9ff'], ['F.Fab', '#afafaf'], ['B.Fab', '#585d84'],
];

const info: [string, string, number][] = [
  ['Pads', '292', 47], ['Vias', '77', 42], ['Track Segments', '460', 166], ['Nets', '32', 47], ['Unrouted', '0', 100],
];

const Eye = () => (
  <svg width="26" height="14" viewBox="0 0 26 14" aria-hidden="true">
    <path d="M0 7Q6 0 13 0t13 7q-6 7-13 7T0 7z" fill={C.light} />
    <circle cx="13" cy="7" r="4" fill={C.light} stroke="#404040" strokeWidth="2.5" />
  </svg>
);

export default function App() {
  return (
    <Window>
      <Global />
      <TitleBar>
        <Lights $left={-2} $top={6}>
          <Light $color="#616161" aria-label="Close window" />
          <Light $color="#616161" aria-label="Minimise window" />
          <Light $color="#616161" aria-label="Zoom window" />
        </Lights>
        <Title>*LedMatrix — PCB Editor</Title>
      </TitleBar>

      <IconBar><Tools spec={topTools} /></IconBar>

      <OptionBar>
        <TrackGroup>
          <Drop label="Track width" value="Track: use netclass width" width={423} />
          <ToolButton $on aria-label="Automatic track width"><Icon name="autoWidth" /></ToolButton>
        </TrackGroup>
        <BarRule />
        <Drop label="Via size" value="Via: use netclass sizes" width={608} />
        <BarRule />
        <LayerBox>
          <LayerChip />
          <LayerInput aria-label="Active layer" defaultValue="F.Cu (PgUp)" />
        </LayerBox>
        <WhiteButton aria-label="Choose layer">
          <svg width="16" height="12" viewBox="0 0 16 12" fill="none" stroke="#222" strokeWidth="3" strokeLinecap="round" strokeLinejoin="round"><path d="M3 3l5 6 5-6" /></svg>
        </WhiteButton>
        <PairButton aria-label="Layer pair">
          <svg width="48" height="48" viewBox="0 0 48 48"><path d="M0 0h34L12 48H0z" fill={C.red} /><path d="M37 0h11v48H16z" fill="#567dbc" /><path d="M33 0 11 48M38 0 16 48" stroke="#eee" strokeWidth="2" /><path d="M35.500 0l-22 48" stroke="#222" strokeWidth="2" strokeDasharray="4 3" /></svg>
        </PairButton>
        <BarRule />
        <Drop label="Grid" value="0.5000 mm (0.0197 in)" width={358} />
        <BarRule />
        <Drop label="Zoom" value="Zoom 0.35" width={228} />
      </OptionBar>

      <Body>
        <Work>
          <WorkRow>
            <SideTools $width={50} $start={-14}><Tools spec={leftTools} across /></SideTools>
            <Canvas><BoardDrawing /></Canvas>
            <SideTools $width={82} $start={4}><Tools spec={rightTools} across /></SideTools>
          </WorkRow>
          <InfoBar>
            {info.map(([k, v, w]) => <InfoItem key={k} $width={w}><dt>{k}</dt><dd>{v}</dd></InfoItem>)}
          </InfoBar>
        </Work>

        <Panel>
          <PanelHead>Appearance</PanelHead>
          <TabStrip $start={38} $top={26} $small>
            <Tab $width={114} $on>Layers</Tab>
            <Tab $width={128} $bar>Objects</Tab>
            <Tab $width={96}>Nets</Tab>
          </TabStrip>
          <LayerPage>
            <LayerScroll>
              <LayerList>
                {layers.map(([name, a, b], i) => (
                  <LayerRow key={name} $on={i === 0}>
                    <Marker $on={i === 0} />
                    <Swatch $a={a} $b={b ?? a} />
                    <EyeButton aria-label={'Show ' + name}><Eye /></EyeButton>
                    {name}
                  </LayerRow>
                ))}
              </LayerList>
              <Thumb />
            </LayerScroll>
            <DisplayOptions>Layer Display Options</DisplayOptions>
          </LayerPage>
          <Presets>
            <label htmlFor="presets">Presets (Ctrl+Tab):</label>
            <SelectBox><Select id="presets" /><DashLine /><Chevrons /></SelectBox>
            <label htmlFor="viewports">Viewports (Option+Tab):</label>
            <SelectBox><Select id="viewports" /><DashLine /><Chevrons /></SelectBox>
          </Presets>
          <PanelHead as="div" />
          <Filters>
            <Check text="Locked items" quiet />
            <Check text="Text" on quiet />
            <Check text="Vias" on quiet />
            <Check text="Graphics" on quiet />
            <Check text="Rule Areas" on quiet />
            <Check text="Other items" on quiet />
          </Filters>
        </Panel>
      </Body>

      <StatusBar>
        <StatusField $width={143}>Z 0.38</StatusField>
        <StatusField $width={315}>{'X 195.1200  Y 147.4233'}</StatusField>
        <span>dx 195.1200</span>
      </StatusBar>

      <Dialog role="dialog" aria-label="Design Rules Checker">
        <DialogTitle>
          <Lights $left={13} $top={14}>
            <Light $color="#ec695e" aria-label="Close" />
            <Light $color="#5f5f5f" aria-label="Minimise" />
            <Light $color="#61c454" aria-label="Zoom" />
          </Lights>
          <Title as="h2">Design Rules Checker</Title>
        </DialogTitle>
        <DialogChecks>
          <Check text="Refill all zones before performing DRC" on />
          <Check text="Report all errors for each track" />
        </DialogChecks>
        <TabStrip $start={81} $top={52}>
          <Tab $width={206} $on>Violations (0)</Tab>
          <Tab $width={326} $bar>Unconnected Items (0)</Tab>
          <Tab $width={362} $bar>Schematic Parity (not run)</Tab>
          <Tab $width={254}>Ignored Tests (8)</Tab>
        </TabStrip>
        <ResultPage><ResultList /></ResultPage>
        <ShowRow>
          <ShowLabel>Show:</ShowLabel>
          <Check text="All" width={170} />
          <Check text="Errors" on width={132} />
          <Counter $after={64}>0</Counter>
          <Check text="Warnings" on width={171} />
          <Counter $after={65}>0</Counter>
          <Check text="Exclusions" />
          <Spacer />
          <PushButton $width={168}>Save...</PushButton>
        </ShowRow>
        <ActionRow>
          <ButtonPair $gap={20}>
            <PushButton $width={210}>Delete Marker</PushButton>
            <PushButton $width={262}>Delete All Markers</PushButton>
          </ButtonPair>
          <ButtonPair $gap={24}>
            <PushButton $width={168} $main>Close</PushButton>
            <PushButton $width={168}>Run DRC</PushButton>
          </ButtonPair>
        </ActionRow>
      </Dialog>
    </Window>
  );
}
